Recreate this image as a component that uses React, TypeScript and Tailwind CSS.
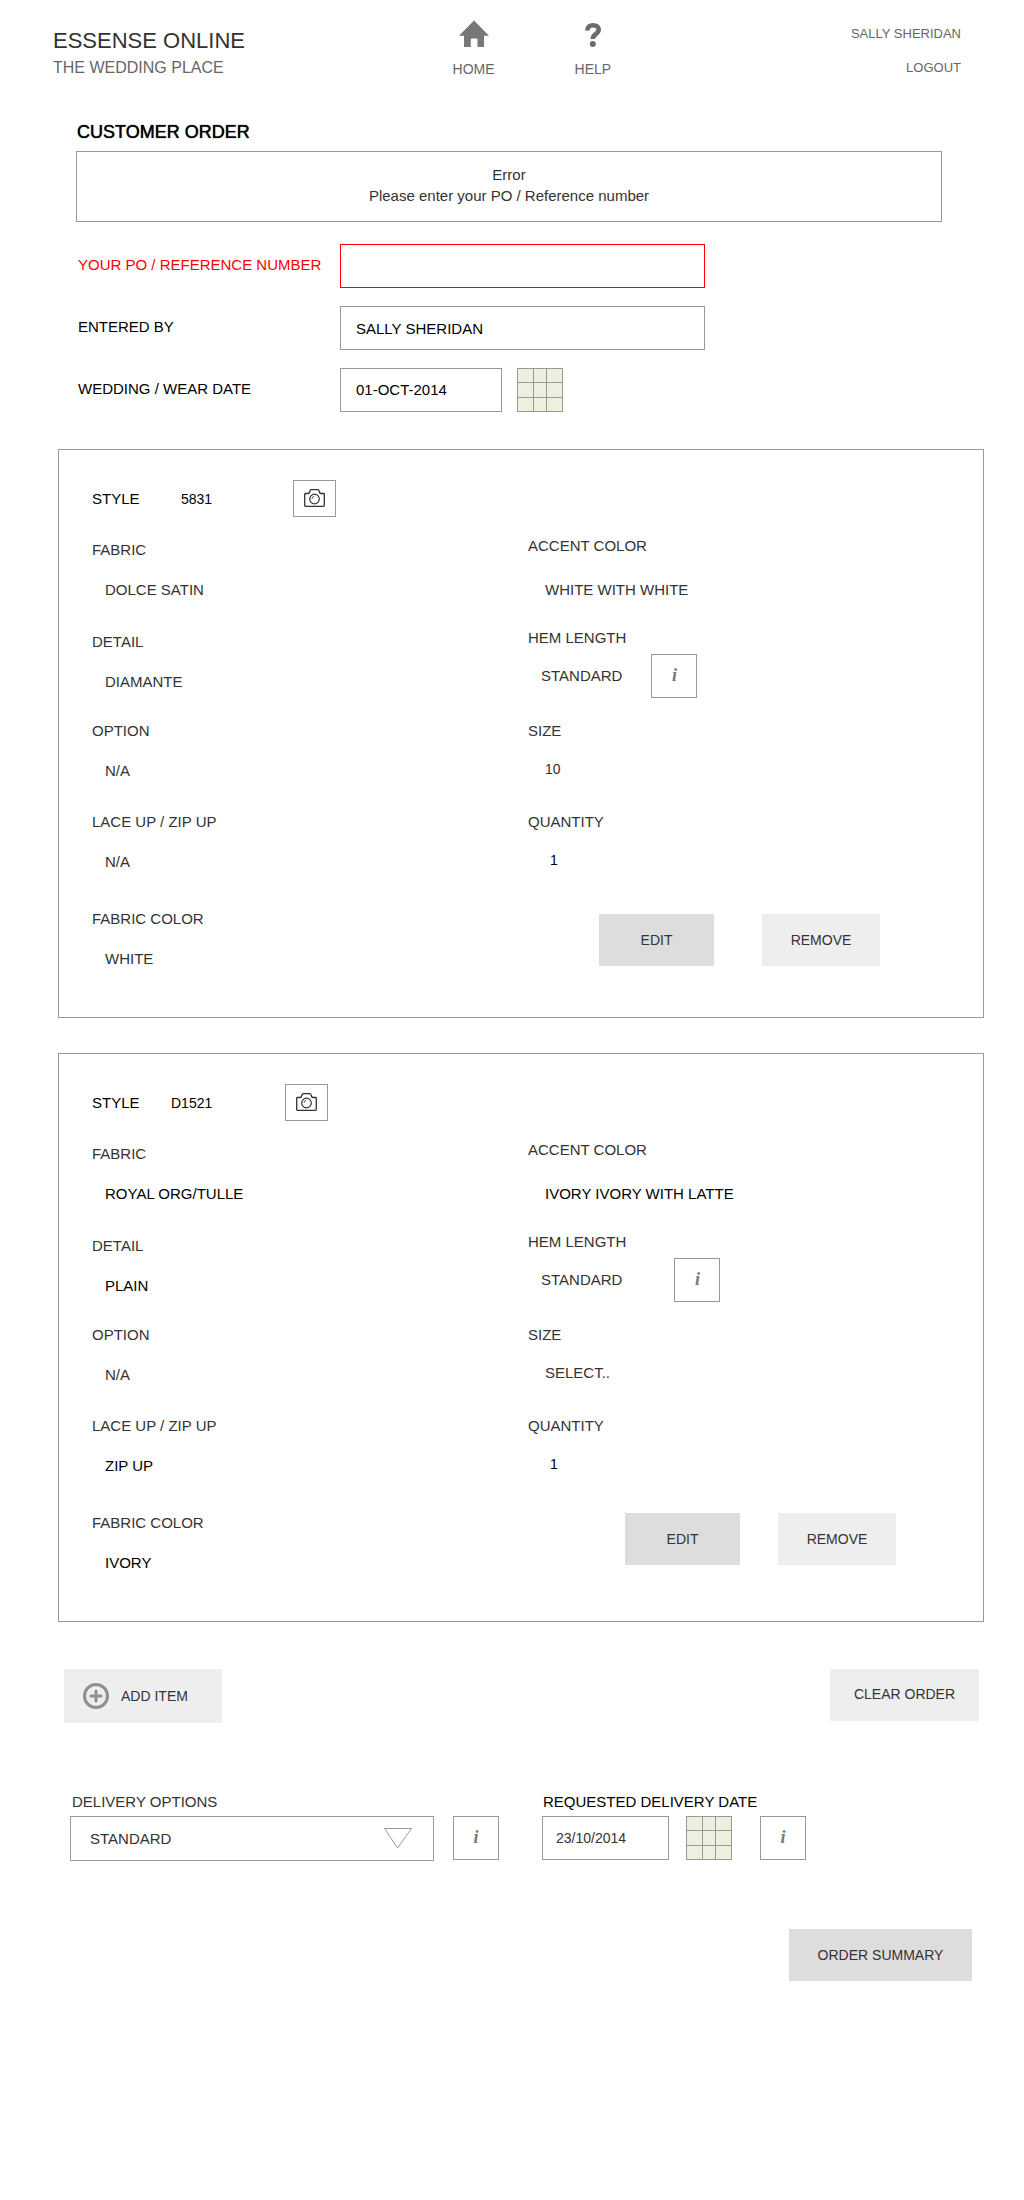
import { useState } from "react";
import type { ReactNode } from "react";

type Field = {
    label: string;
    value: string;
    tone?: string;
};

type Item = {
    style: string;
    fabric: Field;
    left: Field[];
    accent: Field;
    hem: Field;
    size: Field;
    quantity: string;
    styleCols: string;
    hemGap: string;
    actions: string;
};

const ITEMS: Item[] = [
    {
        style: "5831",
        fabric: { label: "FABRIC", value: "DOLCE SATIN" },
        left: [
            { label: "DETAIL", value: "DIAMANTE" },
            { label: "OPTION", value: "N/A" },
            { label: "LACE UP / ZIP UP", value: "N/A" },
            { label: "FABRIC COLOR", value: "WHITE" },
        ],
        accent: { label: "ACCENT COLOR", value: "WHITE WITH WHITE" },
        hem: { label: "HEM LENGTH", value: "STANDARD" },
        size: { label: "SIZE", value: "10" },
        quantity: "1",
        styleCols: "grid-cols-[89px_112px_auto]",
        hemGap: "gap-[29px]",
        actions: "mt-11 gap-12 pr-[103px]",
    },
    {
        style: "D1521",
        fabric: { label: "FABRIC", value: "ROYAL ORG/TULLE", tone: "text-black" },
        left: [
            { label: "DETAIL", value: "PLAIN", tone: "text-black" },
            { label: "OPTION", value: "N/A" },
            { label: "LACE UP / ZIP UP", value: "ZIP UP", tone: "text-black" },
            { label: "FABRIC COLOR", value: "IVORY", tone: "text-black" },
        ],
        accent: { label: "ACCENT COLOR", value: "IVORY IVORY WITH LATTE", tone: "text-black" },
        hem: { label: "HEM LENGTH", value: "STANDARD" },
        size: { label: "SIZE", value: "SELECT.." },
        quantity: "1",
        styleCols: "grid-cols-[79px_114px_auto]",
        hemGap: "gap-[52px]",
        actions: "mt-[39px] gap-[38px] pr-[87px]",
    },
];

function HomeIcon() {
    return (
        <svg width="30" height="28" viewBox="0 0 30 28" fill="#777777" aria-hidden="true">
            <path d="M15 .6 30 15.800H25V27H18.500V19.500Q18.500 18.500 17.500 18.500H12.800Q11.800 18.500 11.800 19.500V27H5V15.800H0Z" />
        </svg>
    );
}

function HelpIcon() {
    return (
        <svg width="16" height="28" viewBox="0 0 16 28" fill="none" stroke="#6b6b6b" aria-hidden="true">
            <path d="M2.300 10.500C2.300 6.800 4.800 5.200 8 5.200C11.300 5.200 13.700 6.900 13.700 9.800C13.700 14 7.800 13.700 7.800 19" strokeWidth="4.600" />
            <circle cx="7.800" cy="24" r="3" fill="#6b6b6b" stroke="none" />
        </svg>
    );
}

function CameraIcon() {
    return (
        <svg width="21" height="18" viewBox="0 0 21 18" fill="none" stroke="#333333" aria-hidden="true">
            <path
                d="M1.500 4.500H4.200Q5.400 4.200 5.800 2.500Q6 .7 7.300 .7H13.700Q15 .7 15.200 2.500Q15.600 4.200 16.800 4.500H19.500Q20.300 4.500 20.300 5.300V16.500Q20.300 17.300 19.500 17.300H1.500Q.7 17.300 .7 16.500V5.300Q.7 4.500 1.500 4.500Z"
                strokeWidth="1.300"
            />
            <circle cx="10.500" cy="10" r="4.800" strokeWidth="1.200" />
            <path d="M7.900 10A2.600 2.600 0 0 1 10.300 7.400" strokeWidth=".8" />
        </svg>
    );
}

function PlusIcon() {
    return (
        <svg width="26" height="26" viewBox="0 0 26 26" fill="none" stroke="#8f8f8f" strokeWidth="3" aria-hidden="true">
            <circle cx="13" cy="13" r="11.500" />
            <path d="M13 8V18M8 13H18" strokeLinecap="round" />
        </svg>
    );
}

function InfoButton({ label }: { label: string }) {
    return (
        <button
            type="button"
            aria-label={label}
            className="h-11 w-[46px] shrink-0 border border-[#999999] bg-white pb-0.5 font-['Liberation_Serif',serif] text-[18px] leading-5 font-bold italic text-[#777777]"
        >
            i
        </button>
    );
}

function CalendarButton({ label }: { label: string }) {
    return (
        <button
            type="button"
            aria-label={label}
            className="grid h-11 w-[46px] shrink-0 grid-cols-[15px_12px_1fr] grid-rows-3 gap-px border border-[#999999] bg-[#999999]"
        >
            {Array.from({ length: 9 }, (_, i) => (
                <span key={i} className="bg-[#efefe0]" />
            ))}
        </button>
    );
}

function Detail({
    label,
    gap = "gap-5",
    indent = "pl-[13px]",
    tone = "text-[#333333]",
    children,
}: {
    label: string;
    gap?: string;
    indent?: string;
    tone?: string;
    children: ReactNode;
}) {
    return (
        <div className={`flex flex-col ${gap}`}>
            <dt>{label}</dt>
            <dd className={`flex h-5 items-center ${indent} ${tone}`}>{children}</dd>
        </div>
    );
}

function ItemCard({ item }: { item: Item }) {
    return (
        <section className="mr-10 ml-[58px] border border-[#999999] pt-[30px] pb-12 pl-[33px]">
            <div className={`grid items-center text-black ${item.styleCols}`}>
                <h2>STYLE</h2>
                <span className="text-[14px]">{item.style}</span>
                <button
                    type="button"
                    aria-label={`Photo of style ${item.style}`}
                    className="flex h-[37px] w-[43px] items-center justify-center border border-[#999999] bg-white pb-px"
                >
                    <CameraIcon />
                </button>
            </div>

            <div className="grid grid-cols-[436fr_455fr]">
                <dl className="grid grid-rows-[92px_89px_91px_97px_auto] pt-[23px]">
                    {[item.fabric, ...item.left].map((field) => (
                        <Detail key={field.label} label={field.label} tone={field.tone}>
                            {field.value}
                        </Detail>
                    ))}
                </dl>

                <div className="pt-[19px]">
                    <dl className="grid grid-rows-[92px_93px_91px_auto]">
                        <Detail label={item.accent.label} gap="gap-6" indent="pl-[17px]" tone={item.accent.tone}>
                            {item.accent.value}
                        </Detail>
                        <Detail label={item.hem.label} gap="gap-[18px]">
                            <span className={`flex items-center ${item.hemGap}`}>
                                {item.hem.value}
                                <InfoButton label="About hem length" />
                            </span>
                        </Detail>
                        <Detail label={item.size.label} gap="gap-[18px]" indent="pl-[17px]">
                            {item.size.value === "SELECT.." ? (
                                <select aria-label="Size" className="appearance-none bg-transparent">
                                    <option>SELECT..</option>
                                    <option>8</option>
                                    <option>10</option>
                                    <option>12</option>
                                </select>
                            ) : (
                                <span className="text-[14px]">{item.size.value}</span>
                            )}
                        </Detail>
                        <Detail label="QUANTITY" gap="gap-[18px]" indent="pl-[22px]" tone="text-black">
                            <span className="text-[14px]">{item.quantity}</span>
                        </Detail>
                    </dl>

                    <div className={`flex justify-end text-[14px] ${item.actions}`}>
                        <button type="button" className="h-[52px] w-[115px] bg-[#dddddd]">
                            EDIT
                        </button>
                        <button type="button" className="h-[52px] w-[118px] bg-[#eeeeee]">
                            REMOVE
                        </button>
                    </div>
                </div>
            </div>
        </section>
    );
}

export default function App() {
    const [po, setPo] = useState("");
    const [enteredBy, setEnteredBy] = useState("SALLY SHERIDAN");
    const [wearDate, setWearDate] = useState("01-OCT-2014");
    const [delivery, setDelivery] = useState("STANDARD");
    const [deliveryDate, setDeliveryDate] = useState("23/10/2014");

    return (
        <div className="min-h-screen bg-white pb-20 font-['Liberation_Sans',Arial,sans-serif] text-[15px] leading-5 text-[#333333]">
            <header className="flex pt-5 pr-[63px] pl-[53px] text-[#666666]">
                <div className="basis-[44%] pt-[7px]">
                    <p className="text-[22px] leading-7 text-[#333333]">ESSENSE ONLINE</p>
                    <p className="text-[16px] leading-[26px]">THE WEDDING PLACE</p>
                </div>
                <nav className="flex flex-1 gap-20 text-[14px]">
                    <a href="#home" className="flex flex-col items-center gap-[11px]">
                        <HomeIcon />
                        HOME
                    </a>
                    <a href="#help" className="flex flex-col items-center gap-[11px]">
                        <HelpIcon />
                        HELP
                    </a>
                </nav>
                <div className="flex flex-col items-end gap-[14px] pt-1 text-[13px]">
                    <span>SALLY SHERIDAN</span>
                    <a href="#logout">LOGOUT</a>
                </div>
            </header>

            <main>
                <div className="mt-[37px] mr-[82px] ml-[76px]">
                    <h1 className="pl-px text-[18px] leading-7 text-black [text-shadow:0_0_1px_#000]">CUSTOMER ORDER</h1>
                    <div role="alert" className="mt-[5px] border border-[#999999] pt-3 pb-[15px] text-center leading-[21px]">
                        <p>Error</p>
                        <p>Please enter your PO / Reference number</p>
                    </div>

                    <form className="mt-[22px] grid grid-cols-[262px_1fr] items-center gap-y-[18px] pl-0.5 text-black">
                        <label htmlFor="po" className="pb-0.5 text-[#ff0000]">
                            YOUR PO / REFERENCE NUMBER
                        </label>
                        <input
                            id="po"
                            value={po}
                            onChange={(e) => setPo(e.target.value)}
                            className="h-11 w-[365px] border border-[#ff0000] px-[15px] outline-none"
                        />

                        <label htmlFor="entered-by" className="pb-0.5">
                            ENTERED BY
                        </label>
                        <input
                            id="entered-by"
                            value={enteredBy}
                            onChange={(e) => setEnteredBy(e.target.value)}
                            className="h-11 w-[365px] border border-[#999999] px-[15px]"
                        />

                        <label htmlFor="wear-date" className="pb-0.5">
                            WEDDING / WEAR DATE
                        </label>
                        <div className="flex gap-[15px]">
                            <input
                                id="wear-date"
                                value={wearDate}
                                onChange={(e) => setWearDate(e.target.value)}
                                className="h-11 w-[162px] border border-[#999999] px-[15px] pb-0.5"
                            />
                            <CalendarButton label="Pick wedding date" />
                        </div>
                    </form>
                </div>

                <div className="mt-[37px] flex flex-col gap-[35px]">
                    {ITEMS.map((item) => (
                        <ItemCard key={item.style} item={item} />
                    ))}
                </div>

                <div className="mt-[47px] mr-[45px] ml-16 flex items-start justify-between text-[14px]">
                    <button type="button" className="flex h-[54px] w-[158px] items-center gap-3 bg-[#eeeeee] pl-[19px]">
                        <PlusIcon />
                        ADD ITEM
                    </button>
                    <button type="button" className="h-[52px] w-[149px] bg-[#eeeeee] pb-0.5">
                        CLEAR ORDER
                    </button>
                </div>

                <div className="mt-[69px] mr-10 ml-[70px] flex gap-[43px]">
                    <div className="flex flex-col gap-1">
                        <label htmlFor="delivery" className="pl-0.5">
                            DELIVERY OPTIONS
                        </label>
                        <div className="flex gap-[19px]">
                            <div className="relative">
                                <select
                                    id="delivery"
                                    value={delivery}
                                    onChange={(e) => setDelivery(e.target.value)}
                                    className="h-[45px] w-[364px] appearance-none border border-[#999999] bg-white pl-[19px]"
                                >
                                    <option>STANDARD</option>
                                    <option>EXPRESS</option>
                                </select>
                                <svg
                                    width="28"
                                    height="21"
                                    viewBox="0 0 28 21"
                                    fill="none"
                                    stroke="#999999"
                                    className="pointer-events-none absolute top-3 right-[22px]"
                                    aria-hidden="true"
                                >
                                    <path d="M.5 .5H27.500L13.500 20Z" />
                                </svg>
                            </div>
                            <InfoButton label="About delivery options" />
                        </div>
                    </div>

                    <div className="flex flex-col gap-1">
                        <label htmlFor="delivery-date" className="pl-px text-black">
                            REQUESTED DELIVERY DATE
                        </label>
                        <div className="flex">
                            <input
                                id="delivery-date"
                                value={deliveryDate}
                                onChange={(e) => setDeliveryDate(e.target.value)}
                                className="h-11 w-[127px] border border-[#999999] px-[13px] text-[14px]"
                            />
                            <div className="flex gap-7 pl-[17px]">
                                <CalendarButton label="Pick delivery date" />
                                <InfoButton label="About delivery date" />
                            </div>
                        </div>
                    </div>
                </div>

                <div className="mt-[68px] mr-[52px] flex justify-end text-[14px]">
                    <button type="button" className="h-[52px] w-[183px] bg-[#dddddd]">
                        ORDER SUMMARY
                    </button>
                </div>
            </main>
        </div>
    );
}
